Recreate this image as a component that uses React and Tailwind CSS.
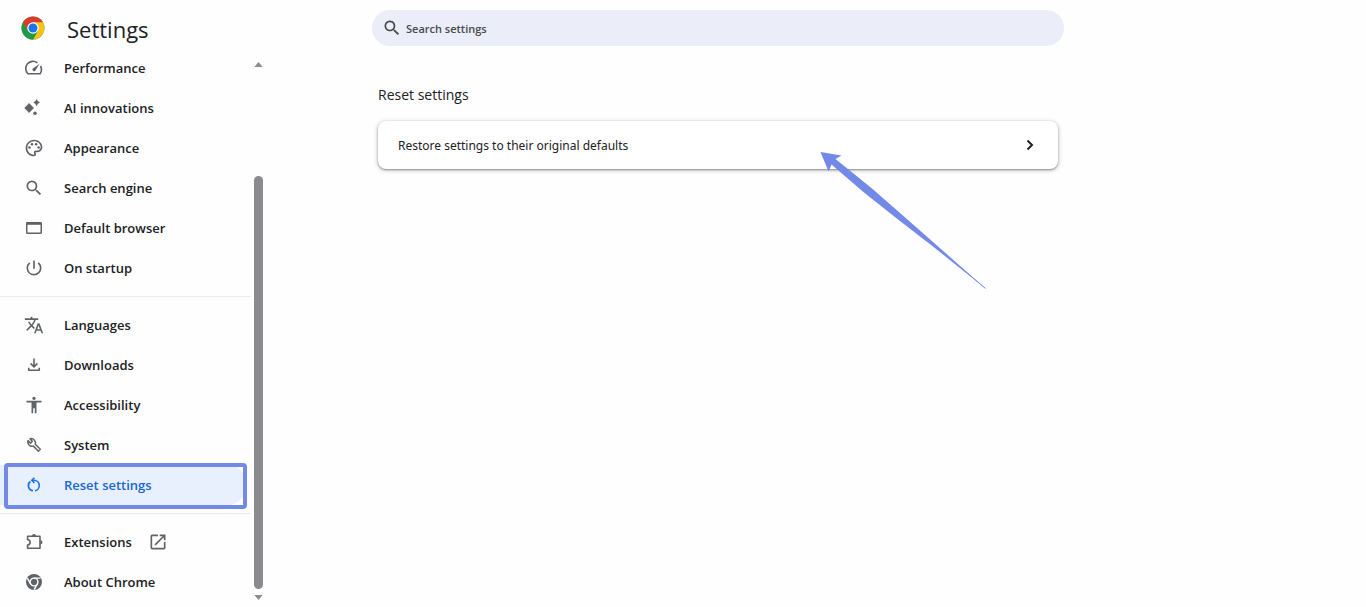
import React from 'react';
import {
  MdOutlinePalette,
  MdSearch,
  MdPowerSettingsNew,
  MdTranslate,
  MdAccessibility,
  MdOpenInNew,
} from 'react-icons/md';

function ChromeLogo() {
  return (
    <svg viewBox="0 0 48 48" className="size-6 shrink-0" aria-hidden="true">
      <circle cx="24" cy="24" r="23" fill="#34a853" />
      <path d="M24 24 4.1 12.5A23 23 0 0 1 43.9 12.5H24Z" fill="#db3a2c" />
      <path d="M43.9 12.5A23 23 0 0 1 24 47L34 29.7 24 12.5Z" fill="#fbc116" />
      <path d="M4.1 12.5A23 23 0 0 0 24 47L34 29.7 14 29.7Z" fill="#219a46" />
      <path d="M4.1 12.5 14 29.7 24 12.5Z" fill="#db3a2c" />
      <circle cx="24" cy="24" r="11.5" fill="#fff" />
      <circle cx="24" cy="24" r="9" fill="#1a73e8" />
    </svg>
  );
}

function SpeedIcon() {
  return (
    <svg viewBox="0 0 20 20" fill="none" stroke="currentColor" strokeWidth="1.6">
      <path d="M13.4 4.9A7.2 7.2 0 0 0 3.9 15.7H16.1A7.2 7.2 0 0 0 16.4 8" strokeLinejoin="round" />
      <path d="M15.6 5.8 11.3 12.7A1.6 1.6 0 0 1 8.9 10.4Z" fill="currentColor" stroke="none" />
    </svg>
  );
}

function SparkIcon() {
  return (
    <svg viewBox="0 0 20 20" fill="currentColor">
      <path d="M5.1 5.6 9.4 10 5.1 14.4.8 10Z" stroke="currentColor" strokeWidth="1" strokeLinejoin="round" />
      <path d="M12.6 1Q13.4 3.7 16 4.6 13.4 5.5 12.6 8.2 11.8 5.5 9.2 4.6 11.8 3.7 12.6 1Z" />
      <circle cx="11" cy="15.2" r="1.8" />
    </svg>
  );
}

function BrowserIcon() {
  return (
    <svg viewBox="0 0 20 20" fill="none" stroke="currentColor" strokeWidth="1.5">
      <rect x="2.75" y="4.75" width="14.5" height="10.5" rx=".8" />
      <path d="M2.5 5.5H17.5" strokeWidth="2.6" />
    </svg>
  );
}

function DownloadIcon() {
  return (
    <svg viewBox="0 0 20 20" fill="none" stroke="currentColor" strokeWidth="1.6">
      <path d="M10 3.5V12M6.6 8.4 10 11.8 13.4 8.4" />
      <path d="M4.75 12.7V15.25H15.25V12.7" strokeLinejoin="round" />
    </svg>
  );
}

function WrenchIcon() {
  return (
    <svg viewBox="0 0 20 20" fill="none" stroke="currentColor" strokeWidth="1.5" strokeLinejoin="round">
      <path d="M4 5.6A4.3 4.3 0 0 0 9.4 11.1L14.4 16.2 16.3 14.3 11.3 9.2A4.3 4.3 0 0 0 6 3.8L8.3 6.3 6.5 8.1Z" />
    </svg>
  );
}

function ResetIcon() {
  return (
    <svg viewBox="0 0 20 20" fill="none" stroke="currentColor" strokeWidth="1.6">
      <path d="M6.4 6.5A5.2 5.2 0 0 0 9 15.8" />
      <path d="M8.5 5.3H10A5.3 5.3 0 0 1 11 15.8" />
      <path d="M10.4 2.7 7.8 5.3 10.4 7.9" />
    </svg>
  );
}

function ExtensionIcon() {
  return (
    <svg viewBox="0 0 20 20" fill="none" stroke="currentColor" strokeWidth="1.6">
      <path d="M4.2 4.3H16V16.3H3.6V13Q6.2 12.5 6.2 10.2T3.6 7.5V4.3Z" strokeLinejoin="round" />
      <path d="M8 4A2 2 0 0 1 12 4ZM16.5 8.2A2 2 0 0 1 16.5 12.2Z" fill="currentColor" stroke="none" />
    </svg>
  );
}

function ChromeIcon() {
  return (
    <svg viewBox="0 0 20 20">
      <circle cx="10" cy="10" r="8" fill="currentColor" />
      <g fill="none" stroke="#fff" strokeWidth="1.4">
        <circle cx="10" cy="10" r="3.9" />
        <path d="M10 6.1H16.6M13.4 11.95 10.1 17.7M6.6 11.95 3.3 6.2" />
      </g>
    </svg>
  );
}

const groups = [
  [
    { label: 'Performance', Icon: SpeedIcon },
    { label: 'AI innovations', Icon: SparkIcon },
    { label: 'Appearance', Icon: MdOutlinePalette },
    { label: 'Search engine', Icon: MdSearch },
    { label: 'Default browser', Icon: BrowserIcon },
    { label: 'On startup', Icon: MdPowerSettingsNew },
  ],
  [
    { label: 'Languages', Icon: MdTranslate },
    { label: 'Downloads', Icon: DownloadIcon },
    { label: 'Accessibility', Icon: MdAccessibility },
    { label: 'System', Icon: WrenchIcon },
    { label: 'Reset settings', Icon: ResetIcon, selected: true },
  ],
  [
    { label: 'Extensions', Icon: ExtensionIcon, external: true },
    { label: 'About Chrome', Icon: ChromeIcon },
  ],
];

function NavItem({ label, Icon, selected, external }) {
  return (
    <li className="relative">
      <a
        href="#"
        aria-current={selected ? 'page' : undefined}
        className={
          selected
            ? 'mr-1 flex h-10 items-center rounded-r-full bg-[#e8f0fe] pl-6 text-[#1967d2]'
            : 'mr-1 flex h-10 items-center pl-6 text-[#202124]'
        }
      >
        <span
          className={
            selected
              ? 'flex size-5 items-center justify-center text-[#1a73e8] [&>svg]:size-5'
              : 'flex size-5 items-center justify-center text-[#5f6368] [&>svg]:size-5'
          }
        >
          <Icon />
        </span>
        <span className="ml-5 pt-0.5 text-[13px] font-semibold">{label}</span>
        {external && <MdOpenInNew className="ml-4 size-5 text-[#5f6368]" />}
      </a>
      {selected && (
        <span className="pointer-events-none absolute -top-0.5 right-1 -bottom-1 left-1 rounded-sm border-4 border-[#7289e8]" />
      )}
    </li>
  );
}

function Sidebar() {
  return (
    <aside className="flex w-[266px] shrink-0 flex-col">
      <header className="flex h-12 items-center gap-[22px] pt-2 pl-[21px]">
        <ChromeLogo />
        <h1 className="pt-0.5 text-[22px] font-medium text-[#202124]">Settings</h1>
      </header>
      <div className="flex">
        <nav aria-label="Settings" className="flex-1">
          {groups.map((items, i) => (
            <ul key={i} className={i > 0 ? 'mt-2 border-t border-[#e8eaed] pt-2' : ''}>
              {items.map((item) => (
                <NavItem key={item.label} {...item} />
              ))}
            </ul>
          ))}
        </nav>
        <div className="flex w-[15px] flex-col items-center pt-3.5 pb-0.5 text-[#8b8a8d]" aria-hidden="true">
          <svg viewBox="0 0 10 6" className="h-[5px] w-[9px] shrink-0" fill="currentColor">
            <path d="M0 6 5 0 10 6Z" />
          </svg>
          <div className="h-[109px]" />
          <div className="w-[9px] flex-1 rounded-full bg-[#8b8a8d]" />
          <svg viewBox="0 0 10 6" className="mt-1.5 h-[5px] w-[9px] shrink-0" fill="currentColor">
            <path d="M0 0 5 6 10 0Z" />
          </svg>
        </div>
      </div>
    </aside>
  );
}

function Pointer() {
  return (
    <svg
      viewBox="0 0 166 138"
      className="pointer-events-none absolute top-[30px] right-[72px] h-[138px] w-[166px]"
      fill="#7289e8"
      aria-hidden="true"
    >
      <path d="M.5 1 21.5 4.6 15.5 8 52 37.5 80 62 113 91 165.5 137.5 113 95.5 80 70 44 41.5 11.5 13.5 8.5 20.5Z" />
      <path d="M113 93.2 165.5 137.5" fill="none" stroke="#7289e8" />
    </svg>
  );
}

export default function App() {
  return (
    <div className="flex min-h-screen bg-[#fefefe] font-['Open_Sans','Noto_Sans',sans-serif] text-[#202124]">
      <Sidebar />
      <main className="ml-[106px] w-full max-w-[692px] pt-2.5">
        <label className="flex h-9 items-center rounded-full bg-[#ebedf8] pl-2.5 text-[#474747]">
          <MdSearch className="size-5" aria-hidden="true" />
          <input
            type="search"
            aria-label="Search settings"
            placeholder="Search settings"
            className="ml-1 flex-1 bg-transparent pt-0.5 text-[11px] font-semibold outline-none placeholder:text-[#474a50]"
          />
        </label>
        <section className="mx-1.5 mt-10">
          <h2 className="text-sm leading-[18px]">Reset settings</h2>
          <div className="relative mt-[17px]">
            <button
              type="button"
              className="flex h-12 w-full items-center justify-between rounded-lg bg-white px-5 text-left text-xs shadow-[0_1px_2px_0_rgba(60,64,67,0.5),0_1px_4px_1px_rgba(60,64,67,0.2)]"
            >
              <span className="pt-0.5 font-['Noto_Sans','Open_Sans',sans-serif]">
                Restore settings to their original defaults
              </span>
              <svg viewBox="0 0 16 16" className="size-4" fill="none" stroke="currentColor" strokeWidth="2" aria-hidden="true">
                <path d="M5.5 3.5 10 8 5.5 12.5" />
              </svg>
            </button>
            <Pointer />
          </div>
        </section>
      </main>
    </div>
  );
}
